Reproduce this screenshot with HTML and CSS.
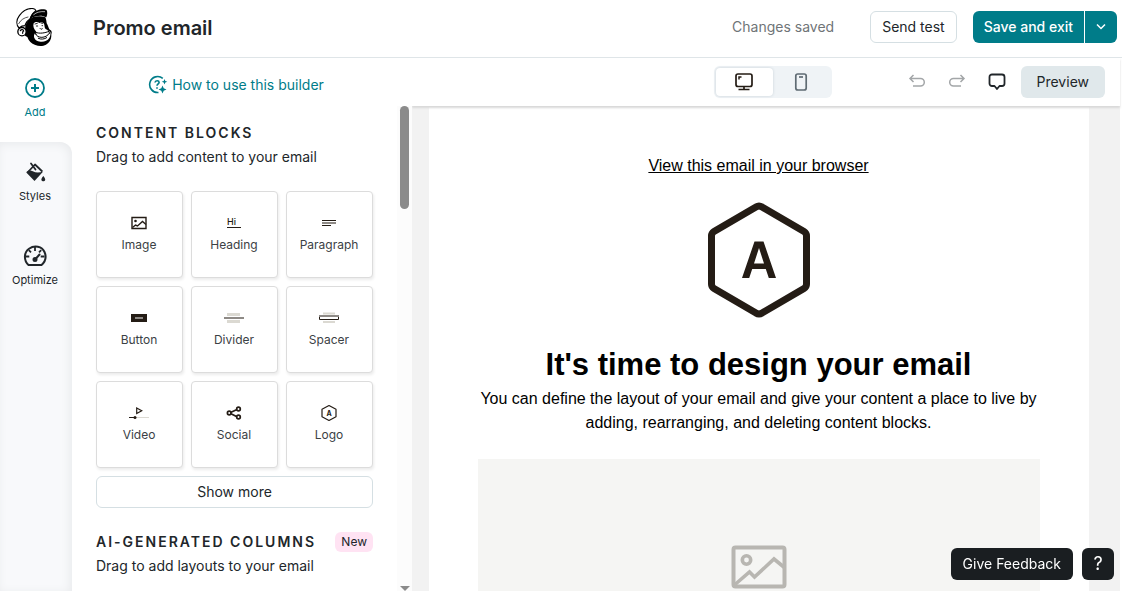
FILE: index.html
```html
<!DOCTYPE html>
<html lang="en">
<head>
<meta charset="utf-8">
<meta name="viewport" content="width=device-width, initial-scale=1">
<title>Promo email</title>
<link rel="stylesheet" href="styles.css">
</head>
<body>
<div class="app">
  <header class="topbar">
    <a class="brand" href="#" aria-label="Home">
      <svg width="36" height="38" viewBox="48 24 108 114" fill="none" stroke="#000" stroke-linecap="round" stroke-linejoin="round">
        <path fill="#000" stroke="none" d="M76 78c4-12 12-22 24-27 12-3 26-3 36 1 3 6 3 12 4 18 4 6 5 12 8 18 5 3 8 6 7 11-1 3-1 5-1 9 0 11-6 20-16 26-9 5-22 5-32 1-12-4-20-12-24-24-4-3-8-3-8-6z"/>
        <path fill="#fff" stroke="none" d="M101 70c5-6 13-5 17-1 6-5 14-2 15 5 1 6 1 11 5 14 6 3 13 5 14 11-1 5-1 10-4 15-6 9-16 12-26 11-11-1-19-7-20-15-1-7 3-11 7-15-7-7-11-16-8-25z"/>
        <path fill="#fff" stroke-width="3.500" d="M57 84C48 74 49 59 58 47C68 33 84 25 97 25.500C102 26 106 28 108 32C98 38 94 46 90 57C82 62 77 69 75 77C68 77 62 80 57 84z"/>
        <path stroke-width="2" d="M56 71C62 59 73 53 84 51"/>
        <path fill="#000" stroke="none" d="M88 60C91 46 98 37 110 32C122 27 135 27 140 31C143 37 142 45 139 52C128 46 118 46 109 49C101 51 94 54 88 60z"/>
        <path stroke="#fff" stroke-width="2" d="M101 44C110 36 122 34 134 35"/>
        <circle cx="66" cy="95" r="12.500" fill="#fff" stroke-width="4"/>
        <path stroke-width="3.500" d="M61 92c3-5 9-4 10 1-4 1-3 4-3 7"/>
        <path stroke-width="2.500" d="M105 72l7-2M123 69l5 1M109 78h4M126 77h2M120 85l3 3 4-2"/>
        <path stroke-width="3" d="M107 97c12 5 28 2 40-3M107 102c5 14 31 14 41-2M105 95l3 8M145 92l4 8M115 115c8 4 18 3 25-2"/>
      </svg>
    </a>
    <h1 class="title">Promo email</h1>
    <span class="status">Changes saved</span>
    <button class="btn btn-outline" type="button">Send test</button>
    <div class="split">
      <button class="btn btn-primary" type="button">Save and exit</button>
      <button class="btn btn-primary btn-caret" type="button" aria-label="More save options">
        <svg width="12" height="8" viewBox="0 0 12 8" fill="none" stroke="#fff" stroke-width="1.5"><path d="M2 1.5l4 4 4-4"/></svg>
      </button>
    </div>
  </header>

  <div class="workspace">
    <nav class="rail" aria-label="Builder">
      <a class="rail-item active" href="#">
        <svg width="24" height="24" viewBox="0 0 24 24" fill="none" stroke="currentColor" stroke-width="1.8"><circle cx="12" cy="12" r="9"/><path d="M12 8v8M8 12h8" stroke-width="2"/></svg>
        Add
      </a>
      <div class="rail-rest">
        <a class="rail-item" href="#">
          <svg width="24" height="24" viewBox="0 0 24 24"><path d="M5 12l7-7.500 7.300 7" fill="none" stroke="currentColor" stroke-width="1.800" stroke-linejoin="round"/><path d="M8 3.500l4.500 6" fill="none" stroke="currentColor" stroke-width="1.800" stroke-linecap="round"/><path fill="currentColor" d="M3.300 12.500c1-2 4-2.500 6.500-1.200 3 1.500 6 1.600 10.400.3l-8.700 9.400zM20.300 16c1.500 2 2.300 3 1.800 4.200-.6 1.500-3 1.500-3.600 0-.5-1.200.3-2.200 1.800-4.200z"/></svg>
          Styles
        </a>
        <a class="rail-item" href="#">
          <svg width="24" height="24" viewBox="0 0 24 24" fill="none" stroke="currentColor" stroke-width="2" stroke-linejoin="round"><path d="M5.500 21C.5 16.500.8 8.500 6 4.800c5.500-4 13-2.500 15.500 3.200 2 4.600.8 9.600-3 13z"/><path stroke-width="1.800" d="M12 3v4M2.500 12.500H6.300M17.700 12.500h3.800M5.800 6.200l2.200 2.200M18.200 6.200L16 8.400"/><path d="M12.500 15l4-4.500" stroke-linecap="round"/><circle cx="12" cy="15.500" r="1.500" fill="currentColor"/></svg>
          Optimize
        </a>
      </div>
    </nav>

    <aside class="panel">
      <a class="howto" href="#">
        <svg width="20" height="20" viewBox="0 0 20 20" fill="none" stroke="currentColor" stroke-width="1.600"><path d="M14.800 3.400A8 8 0 1 0 10.500 17.500"/><path d="M7 7.500c.3-2.200 4-2.300 4.100-.1 0 1.500-2.100 1.500-2.100 3.400M9 12.200v1.500"/><path stroke="none" fill="currentColor" d="M16.500 4l.8 2 2 .8-2 .8-.8 2-.8-2-2-.8 2-.8zM14.500 10.500l1.200 2.800 2.800 1.200-2.800 1.200-1.200 2.800-1.200-2.800-2.800-1.200 2.800-1.200z"/></svg>
        How to use this builder
      </a>
      <div class="panel-scroll">
        <div class="panel-content">
          <section>
            <h2 class="section-title">Content blocks</h2>
            <p class="section-note">Drag to add content to your email</p>
            <div class="tiles">
              <button class="tile" type="button"><svg width="22" height="20" viewBox="0 0 22 20" fill="none" stroke="#241c15" stroke-width="1.400"><path d="M4 4.500h14v11H4z"/><circle cx="7.500" cy="8" r="1.300" fill="#241c15" stroke="none"/><path d="M4.500 14.500l3-2.500 2 1 5-4.500 3.500 3"/></svg>Image</button>
              <button class="tile" type="button"><svg width="22" height="20" viewBox="0 0 22 20"><text class="hi" x="4" y="12">Hi</text><path d="M4 14.500h14" stroke="#241c15"/></svg>Heading</button>
              <button class="tile" type="button"><svg width="22" height="20" viewBox="0 0 22 20"><path d="M4 7.500h14M4 12.500h9" stroke="#241c15"/><path d="M4 10h14" stroke="#8e8a86" stroke-width="2"/></svg>Paragraph</button>
              <button class="tile" type="button"><svg width="22" height="20" viewBox="0 0 22 20"><path d="M3 6h16v8H3z" fill="#241c15"/><path d="M7 10h8" stroke="#8e8a86" stroke-width="2"/></svg>Button</button>
              <button class="tile" type="button"><svg width="22" height="20" viewBox="0 0 22 20"><path d="M4 6.500h13M4 13.500h13" stroke="#dbd9d2" stroke-width="3"/><path d="M1 10h20" stroke="#8e8a86" stroke-width="2"/></svg>Divider</button>
              <button class="tile" type="button"><svg width="22" height="20" viewBox="0 0 22 20"><path d="M5 5.500h12M5 14h12" stroke="#dbd9d2" stroke-width="2"/><path d="M1.500 8v3.500h19V8" stroke="#241c15" fill="#fff"/><path d="M1 8h20" stroke="#8e8a86" stroke-width="2"/></svg>Spacer</button>
              <button class="tile" type="button"><svg width="22" height="20" viewBox="0 0 22 20"><path d="M1 14.500h20" stroke="#dbd9d2"/><path d="M1 14.500h6" stroke="#241c15"/><circle cx="7" cy="14.500" r="1.500" fill="#241c15"/><path d="M8.700 5v5.500l5-2.700z" fill="none" stroke="#241c15" stroke-width="1.200"/></svg>Video</button>
              <button class="tile" type="button"><svg width="22" height="20" viewBox="0 0 22 20" fill="none" stroke="#241c15" stroke-width="1.700"><path d="M14.500 6.200L6.500 10l8 4"/><circle cx="15.500" cy="6" r="1.800" fill="#fff"/><circle cx="6.200" cy="10" r="1.800" fill="#fff"/><circle cx="15.500" cy="14" r="1.800" fill="#fff"/></svg>Social</button>
              <button class="tile" type="button"><svg width="22" height="20" viewBox="0 0 22 20"><path d="M11 2.500l7 3.700v7.600l-7 3.700-7-3.700V6.200z" fill="none" stroke="#241c15" stroke-width="1.200" stroke-linejoin="round"/><text class="mini-a" x="11" y="12.500" text-anchor="middle">A</text></svg>Logo</button>
            </div>
            <button class="btn show-more" type="button">Show more</button>
          </section>
          <section class="ai">
            <div class="ai-head">
              <h2 class="section-title">AI-generated columns</h2>
              <span class="badge">New</span>
            </div>
            <p class="section-note">Drag to add layouts to your email</p>
          </section>
        </div>
        <div class="scrollbar" aria-hidden="true">
          <div class="thumb"></div>
          <div class="arrow"></div>
        </div>
      </div>
    </aside>

    <main class="stage">
      <div class="toolbar">
        <div class="segment">
          <button class="seg on" type="button" aria-label="Desktop" aria-pressed="true">
            <svg width="20" height="20" viewBox="0 0 20 20" fill="none" stroke="#241c15" stroke-width="1.700"><rect x="2" y="2" width="16" height="12.500" rx="2"/><path d="M10 14.500v3M4.500 17.500h11"/><path d="M5 7.500V5h2.500" stroke-width="1.500"/></svg>
          </button>
          <button class="seg" type="button" aria-label="Mobile" aria-pressed="false">
            <svg width="20" height="20" viewBox="0 0 20 20" fill="none" stroke="#5f6b73" stroke-width="1.700"><rect x="4.800" y="2" width="10.400" height="16" rx="2"/><path d="M8 5h4"/></svg>
          </button>
        </div>
        <div class="tools">
          <button class="tool" type="button" aria-label="Undo">
            <svg width="20" height="20" viewBox="0 0 20 20" fill="none" stroke="#a3a6a8" stroke-width="1.500"><path d="M6.500 3L3 6.500 6.500 10M3 6.500h10.500a3.800 3.800 0 0 1 0 7.600H6"/></svg>
          </button>
          <button class="tool" type="button" aria-label="Redo">
            <svg width="20" height="20" viewBox="0 0 20 20" fill="none" stroke="#a3a6a8" stroke-width="1.500"><path d="M13.500 3L17 6.500 13.500 10M17 6.500H6.500a3.800 3.800 0 0 0 0 7.600H14"/></svg>
          </button>
          <button class="tool" type="button" aria-label="Comments">
            <svg width="20" height="20" viewBox="0 0 20 20" fill="none" stroke="#21262a" stroke-width="1.800" stroke-linejoin="round"><path d="M5 2.500h10a2.500 2.500 0 0 1 2.500 2.500v6.500A2.500 2.500 0 0 1 15 14h-2.500L10 17l-2.500-3H5a2.500 2.500 0 0 1-2.500-2.500V5A2.500 2.500 0 0 1 5 2.500z"/></svg>
          </button>
          <button class="btn btn-soft" type="button">Preview</button>
        </div>
      </div>
      <div class="canvas">
        <article class="email">
          <a class="browser-link" href="#">View this email in your browser</a>
          <svg class="email-logo" width="104" height="116" viewBox="0 0 104 116" role="img" aria-label="Logo"><path d="M49 5Q52 3 55 5L97 29.500Q99.500 31 99.500 34V82Q99.500 85 97 86.500L55 111Q52 113 49 111L7 86.500Q4.500 85 4.500 82V34Q4.500 31 7 29.500z" fill="none" stroke="#241c15" stroke-width="7" stroke-linejoin="round"/><path fill="#241c15" fill-rule="evenodd" d="M47.500 39.500h9L69 76h-7.200l-3-9H45.200l-3 9H35zM52 46l-5 15.500h10z"/></svg>
          <h2 class="email-title">It's time to design your email</h2>
          <p class="email-text">You can define the layout of your email and give your content a place to live by adding, rearranging, and deleting content blocks.</p>
          <div class="placeholder">
            <svg width="56" height="44" viewBox="0 0 56 44" fill="none" stroke="#b8b6b1" stroke-width="4"><rect x="2.500" y="2.500" width="51" height="39" rx="2"/><circle cx="15.500" cy="15" r="4.200" stroke-width="3.600"/><path d="M4 39.500L18.500 27l5 5L43 14l11 9" stroke-width="3.600"/></svg>
          </div>
        </article>
      </div>
    </main>
  </div>

  <div class="floating">
    <button class="btn btn-dark" type="button">Give Feedback</button>
    <button class="btn btn-dark btn-help" type="button" aria-label="Help">?</button>
  </div>
</div>
</body>
</html>
```
FILE: styles.css
```css
* { box-sizing: border-box; }

body {
  margin: 0;
  font: 14px/20px Inter, "Liberation Sans", sans-serif;
  color: #21262a;
  background: #fff;
}

h1, h2, p { margin: 0; }
a { color: inherit; text-decoration: none; }
button { font: inherit; color: inherit; cursor: pointer; }
svg { display: block; flex: none; }

.app {
  height: 100vh;
  display: flex;
  flex-direction: column;
  overflow: hidden;
}

.topbar {
  flex: none;
  display: flex;
  align-items: center;
  height: 58px;
  padding: 0 5px 3px 16px;
  border-bottom: 1px solid #dfe5e8;
}

.title {
  margin-left: 41px;
  padding-top: 2px;
  font-size: 20px;
  line-height: 28px;
  font-weight: 600;
}

.status { margin: 0 36px 0 auto; color: #6f7477; }

.btn {
  height: 32px;
  padding: 0 11px;
  border: 0;
  border-radius: 6px;
  white-space: nowrap;
}

.btn-outline { background: #fff; border: 1px solid #d5dfe3; margin-right: 16px; }
.split { display: flex; gap: 1px; }
.btn-primary { background: #007c89; color: #fff; font-weight: 500; }
.split .btn:first-child { border-radius: 6px 0 0 6px; }
.btn-caret { padding: 0 10px; border-radius: 0 6px 6px 0; }
.btn-soft { background: #e0e8eb; padding: 0 16px; margin-left: 4px; }

.workspace { flex: 1; display: flex; min-height: 0; }

.rail { flex: none; width: 72px; display: flex; flex-direction: column; }

.rail-rest {
  flex: 1;
  background: #f8f9fb;
  border-radius: 0 12px 0 0;
  box-shadow: inset -2px 2px 10px #e8eaec;
}

.rail-item {
  display: flex;
  flex-direction: column;
  align-items: center;
  gap: 4px;
  height: 84px;
  padding: 18px 2px 0 0;
  font-size: 11px;
  line-height: 16px;
}

.rail-item.active { color: #007c89; }

.panel {
  flex: none;
  position: relative;
  z-index: 2;
  width: 340px;
  display: flex;
  flex-direction: column;
  background: #fff;
}

.howto {
  flex: none;
  height: 48px;
  padding: 6px 12px 0 0;
  display: flex;
  align-items: center;
  justify-content: center;
  gap: 4px;
  color: #007c89;
}

.panel-scroll { flex: 1; display: flex; min-height: 0; }
.panel-content { flex: 1; padding: 17px 24px; overflow: hidden; }

.section-title {
  font-size: 14px;
  line-height: 20px;
  font-weight: 600;
  letter-spacing: 2px;
  text-transform: uppercase;
}

.section-note { margin-top: 4px; }

.tiles {
  display: grid;
  grid-template-columns: repeat(3, 1fr);
  gap: 8px;
  margin: 24px 0 8px;
}

.tile {
  display: flex;
  flex-direction: column;
  align-items: center;
  gap: 4px;
  height: 87px;
  padding: 21px 1px 0 0;
  background: #fff;
  border: 1px solid #dcdcdc;
  border-radius: 4px;
  box-shadow: 1px 2px 3px #ececec;
  font-size: 12px;
  line-height: 16px;
  color: #3b4145;
}

.hi { font: 500 9px Inter, sans-serif; fill: #241c15; }
.mini-a { font: 700 7px Inter, sans-serif; fill: #241c15; }

.show-more { width: 100%; background: #fff; border: 1px solid #d5dfe3; }

.ai { margin-top: 24px; }
.ai-head { display: flex; align-items: center; justify-content: space-between; }

.badge {
  padding: 0 6px;
  border-radius: 6px;
  background: #ffe3f3;
  font-size: 12px;
  line-height: 20px;
}

.scrollbar {
  flex: none;
  width: 15px;
  background: #fcfcfc;
  display: flex;
  flex-direction: column;
  align-items: center;
  justify-content: space-between;
}

.thumb { width: 9px; height: 103px; border-radius: 5px; background: #8b8b8b; }
.arrow { border: 5px solid transparent; border-top-color: #8b8b8b; border-bottom: 0; }

.stage { flex: 1; min-width: 0; display: flex; flex-direction: column; padding-right: 2px; }

.toolbar {
  flex: none;
  position: relative;
  z-index: 1;
  display: flex;
  align-items: center;
  justify-content: flex-end;
  gap: 65px;
  height: 48px;
  padding-right: 15px;
  background: #fff;
  box-shadow: 0 2px 2px #d8d8d8;
}

.segment { display: flex; padding: 2px; background: #eff3f6; border-radius: 6px; }

.seg {
  display: flex;
  align-items: center;
  justify-content: center;
  width: 57px;
  height: 28px;
  padding: 0;
  border: 0;
  border-radius: 4px;
  background: none;
}

.seg.on { background: #fff; box-shadow: 0 0 3px #c9d2d8; }

.tools { display: flex; align-items: center; }

.tool {
  display: flex;
  align-items: center;
  justify-content: center;
  width: 40px;
  height: 32px;
  padding: 0;
  border: 0;
  background: none;
}

.canvas {
  flex: 1;
  min-height: 0;
  display: flex;
  justify-content: center;
  padding-right: 15px;
  background: #f2f2f2;
  overflow: hidden;
}

.email {
  width: 100%;
  max-width: 660px;
  padding: 48px 49px 0;
  display: flex;
  flex-direction: column;
  align-items: center;
  background: #fff;
  color: #000;
  font: 16px/24px "Liberation Sans", Arial, sans-serif;
}

.browser-link { text-decoration: underline; }
.email-logo { margin: 24px 0; }
.email-title { font-size: 31px; line-height: 45px; text-align: center; }
.email-text { text-align: center; }

.placeholder {
  align-self: stretch;
  flex: none;
  display: flex;
  align-items: center;
  justify-content: center;
  height: 216px;
  margin-top: 24px;
  background: #f5f5f3;
}

.floating {
  position: fixed;
  right: 8px;
  bottom: 11px;
  z-index: 3;
  display: flex;
  gap: 9px;
}

.btn-dark { background: #1a1e21; color: #fff; padding: 0 12px; }
.btn-help { width: 32px; padding: 0; font-size: 18px; }
```
